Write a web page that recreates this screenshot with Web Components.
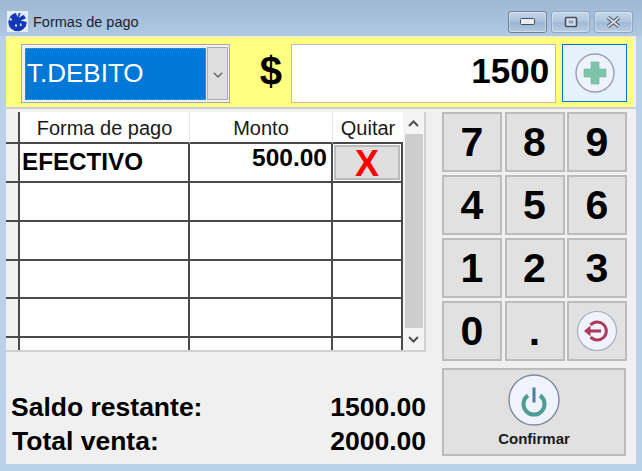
<!DOCTYPE html>
<html lang="es">
<head>
<meta charset="utf-8">
<title>Formas de pago</title>
<style>
  html, body { margin: 0; padding: 0; background: #b9d1ea; overflow: hidden; }
  body { font-family: "Liberation Sans", Arial, sans-serif; }
</style>
</head>
<body>
<pay-window>
  <pay-toolbar slot="top" method="T.DEBITO" amount="1500"></pay-toolbar>
  <pay-table slot="left"></pay-table>
  <pay-totals slot="left"></pay-totals>
  <key-pad slot="right"></key-pad>
</pay-window>

<script>
(function () {
  // ---- round glossy icons used by the add / back / confirm buttons ----
  const ICONS = {
    plus: `<svg width="42" height="42" viewBox="0 0 42 42"><circle cx="21" cy="21" r="19" fill="#eef2fa" stroke="#9a9fb5" stroke-width="1.4"/><path d="M17 10h8v7h7v8h-7v7h-8v-7h-7v-8h7z" fill="#7fc4a8" stroke="#6fb39a" stroke-width=".6"/></svg>`,
    back: `<svg width="42" height="42" viewBox="0 0 42 42"><circle cx="21" cy="21" r="19.5" fill="#f0f3fb" stroke="#a9aec4" stroke-width="1.2"/><path d="M14.6 15A9 9 0 1 1 14.6 27" fill="none" stroke="#b0395a" stroke-width="3"/><path d="M25 21H12" stroke="#b0395a" stroke-width="3"/><path d="M14.5 15.5 8 21l6.5 5.5z" fill="#b0395a"/></svg>`,
    power: `<svg width="52" height="52" viewBox="0 0 52 52"><circle cx="26" cy="26" r="25" fill="#f0f3fb" stroke="#7f8aa0" stroke-width="1.4"/><path d="M20 21.5a10.5 10.5 0 1 0 12 0" fill="none" stroke="#4f9d92" stroke-width="4"/><path d="M26 13.5v15" stroke="#4a7fa0" stroke-width="3"/></svg>`
  };

  class PayWindow extends HTMLElement {
    constructor() {
      super();
      this.attachShadow({ mode: "open" }).innerHTML = `
        <style>
          :host { display: flex; flex-direction: column; width: 642px; height: 471px; box-sizing: border-box; padding: 0 6px 7px 6px;
            background: linear-gradient(#9db6d2 0, #b0c8e2 36px, #b9d1ea 37px); }
          .title { flex: none; height: 36px; display: flex; align-items: center; margin: 0 -6px; padding: 7px 0 0 7px; box-sizing: border-box; font-size: 14.5px; color: #1a2430; }
          .title span { margin-left: 5px; }
          .btns { margin-left: auto; display: flex; gap: 4px; padding-right: 9px; }
          .client { flex: 1; min-height: 0; display: flex; flex-direction: column; background: #f0f0f0; border-top: 1px solid #e4edf6; }
          .body { flex: 1; min-height: 0; display: flex; padding-top: 3px; }
          .left { width: 420px; display: flex; flex-direction: column; }
          .right { margin-left: 16px; }
          .wb { width: 39px; height: 22px; box-sizing: border-box; border: 1px solid #6f8299; border-radius: 3px; display: flex; align-items: center; justify-content: center;
            background: linear-gradient(#c4d5e8, #a8bfd9 50%, #98b2cf 52%, #b4c9e0); box-shadow: inset 0 0 0 1px rgba(255,255,255,.35); }
          .wb.off { border-color: #8fa6c2; background: linear-gradient(#c6d7ea, #afc5dd 50%, #a2bad5 52%, #bacee4); }
        </style>
        <div class="title">
          <svg width="21" height="21" viewBox="0 0 21 21"><rect width="21" height="21" fill="#e4ecf6"/><circle cx="10.5" cy="11" r="9.2" fill="#1438b8"/><path d="M8.5 1 10.5 6 12 1zM14 2 11.5 7 17 3.5zM20 7 13.5 9.5 20 11zM2 6l3.5 2.5L3 10zM8 13.5h2v2H8zM13 12.5h1.5V15H13z" fill="#e4ecf6"/></svg>
          <span>Formas de pago</span>
          <div class="btns">
            <div class="wb"><svg width="15" height="7"><rect x=".5" y=".5" width="14" height="6" rx="1" fill="#e8edf3" stroke="#46505e"/></svg></div>
            <div class="wb off"><svg width="14" height="12"><rect x="1.5" y="1.5" width="11" height="9" rx="1" fill="#d6e0ec" stroke="#46505e" stroke-width="1.6"/><rect x="4.5" y="4.5" width="5" height="3" fill="#8ba3bf"/></svg></div>
            <div class="wb off"><svg width="15" height="12"><path d="M2 1.5 13 10.5M13 1.5 2 10.5" stroke="#48525f" stroke-width="3.6"/><path d="M2 1.5 13 10.5M13 1.5 2 10.5" stroke="#d5dde7" stroke-width="1.8"/></svg></div>
          </div>
        </div>
        <div class="client">
          <slot name="top"></slot>
          <div class="body">
            <div class="left"><slot name="left"></slot></div>
            <div class="right"><slot name="right"></slot></div>
          </div>
        </div>`;
    }
  }

  class PayToolbar extends HTMLElement {
    constructor() {
      super();
      const method = this.getAttribute("method"), amount = this.getAttribute("amount");
      this.attachShadow({ mode: "open" }).innerHTML = `
        <style>
          :host { display: block; flex: none; }
          .bar { height: 70px; box-sizing: border-box; background: #ffff80; margin-right: 3px; padding: 7px 6px 5px 15px; display: flex; }
          .line { height: 2px; background: #cfcfd4; }
          .combo { width: 209px; height: 59px; box-sizing: border-box; border: 1px solid #a9a9a9; background: #f0f0f0; padding: 3px 1px 2px 3px; display: flex; gap: 1px; }
          .sel { width: 181px; height: 52px; box-sizing: border-box; background: #0078d7; outline: 1px dotted #d07a20; outline-offset: -1px; color: #fff; font-size: 26px; line-height: 50px; padding-left: 2px; }
          .arrow { width: 21px; margin-top: -1px; padding-top: 3px; box-sizing: border-box; background: #dfdfdf; border: 1px solid #adadad; display: flex; align-items: center; justify-content: center; }
          .cur { width: 61px; box-sizing: border-box; padding-left: 21px; text-align: center; font-weight: 700; font-size: 40px; line-height: 55px; color: #000; }
          .amt { width: 266px; height: 59px; box-sizing: border-box; background: #fff; border: 1px solid #bdbdbd; text-align: right; font-weight: 700; font-size: 35px; line-height: 51px; padding-right: 6px; color: #000; }
          .add { width: 65px; height: 58px; margin-left: 6px; box-sizing: border-box; background: #e5f1fb; border: 1px solid #0078d7; display: flex; align-items: center; justify-content: center; }
        </style>
        <div class="bar">
          <div class="combo">
            <div class="sel">${method}</div>
            <div class="arrow"><svg width="10" height="6"><path d="M.8.8 5 5 9.2.8" fill="none" stroke="#606060" stroke-width="1.3"/></svg></div>
          </div>
          <div class="cur">$</div>
          <div class="amt">${amount}</div>
          <div class="add">${ICONS.plus}</div>
        </div>
        <div class="line"></div>`;
    }
  }

  class PayTable extends HTMLElement {
    constructor() {
      super();
      const row = (a, b, c, h) => `
        <div class="stub" style="height:${h}px"></div><div class="c name" style="height:${h}px">${a}</div><div class="c amt" style="height:${h}px">${b}</div><div class="c q" style="height:${h}px">${c}</div>`;
      this.attachShadow({ mode: "open" }).innerHTML = `
        <style>
          :host { display: flex; height: 240px; box-sizing: border-box; border-bottom: 2px solid #cfcfd4; border-right: 2px solid #cfcfd4; flex: none; }
          .grid { width: 397px; display: grid; grid-template-columns: 14px 170px 143px 70px; grid-auto-rows: min-content; overflow: hidden; background: #fff; }
          .stub { background: #f0f0f0; border-right: 2px solid #4a4a4a; border-bottom: 2px solid #4a4a4a; box-sizing: border-box; }
          .h { height: 32px; box-sizing: border-box; border-right: 1px solid #e8e8e8; border-bottom: 2px solid #4a4a4a; text-align: center; font-size: 20px; line-height: 33px; color: #1a1a1a; }
          .c { box-sizing: border-box; border-right: 2px solid #4a4a4a; border-bottom: 2px solid #4a4a4a; }
          .name { font-weight: 700; font-size: 24.2px; line-height: 36px; padding-left: 2px; color: #000; }
          .amt { font-weight: 700; font-size: 24.5px; line-height: 27px; text-align: right; padding-right: 4px; color: #000; }
          .q { padding: 1px; }
          .x { height: 35px; box-sizing: border-box; background: #dfdfdf; border: 2px solid #bcbcbc; color: #f00; font-weight: 700; font-size: 36px; line-height: 34px; text-align: center; }
          .sb { width: 21px; background: #f4f4f4; display: flex; flex-direction: column; align-items: center; }
          .up, .dn { height: 22px; width: 100%; display: flex; align-items: center; justify-content: center; }
          .thumb { flex: 1; width: 18px; background: #cdcdcd; }
        </style>
        <div class="grid">
          <div class="stub" style="height:32px"></div>
          <div class="h">Forma de pago</div><div class="h">Monto</div><div class="h" style="border-right:0">Quitar</div>
          ${row("EFECTIVO", "500.00", '<div class="x">X</div>', 39)}
          ${row("", "", "", 39)}${row("", "", "", 39)}${row("", "", "", 38)}${row("", "", "", 39)}${row("", "", "", 20)}
        </div>
        <div class="sb">
          <div class="up"><svg width="11" height="7"><path d="M1 6 5.5 1.5 10 6" fill="none" stroke="#505050" stroke-width="2"/></svg></div>
          <div class="thumb"></div>
          <div class="dn"><svg width="11" height="7"><path d="M1 1 5.5 5.5 10 1" fill="none" stroke="#505050" stroke-width="2"/></svg></div>
        </div>`;
    }
  }

  class PayTotals extends HTMLElement {
    constructor() {
      super();
      this.attachShadow({ mode: "open" }).innerHTML = `
        <style>
          :host { display: block; padding: 38px 0 0 5px; color: #000; font-weight: 700; font-size: 26.5px; }
          .r { display: flex; justify-content: space-between; width: 415px; height: 34px; line-height: 34px; }
          .r + .r { padding-left: 1px; width: 414px; }
        </style>
        <div class="r"><span>Saldo restante:</span><span>1500.00</span></div>
        <div class="r"><span>Total venta:</span><span>2000.00</span></div>`;
    }
  }

  class KeyButton extends HTMLElement {
    constructor() {
      super();
      this.attachShadow({ mode: "open" }).innerHTML = `
        <style>
          :host { display: flex; align-items: center; justify-content: center; box-sizing: border-box; width: 60px; height: 60px;
            background: #e1e1e1; border: 2px solid #bcbcbc; color: #000; font-weight: 700; font-size: 41px; }
        </style>
        <slot></slot>`;
    }
  }

  class KeyPad extends HTMLElement {
    constructor() {
      super();
      const keys = ["7", "8", "9", "4", "5", "6", "1", "2", "3", "0", "."];
      this.attachShadow({ mode: "open" }).innerHTML = `
        <style>
          :host { display: block; }
          .grid { display: grid; grid-template-columns: repeat(3, 60px); column-gap: 2.5px; row-gap: 3px; }
          .ok { display: flex; flex-direction: column; box-sizing: border-box; width: 184px; height: 88px; margin-top: 7px; background: #e1e1e1; border: 2px solid #bcbcbc; align-items: center; padding-top: 4px; font-size: 15px; font-weight: 700; color: #1a1a1a; }
          .ok svg { display: block; }
          .ok span { margin-top: 4px; }
        </style>
        <div class="grid">
          ${keys.map((k) => `<key-button>${k}</key-button>`).join("")}
          <key-button>${ICONS.back}</key-button>
        </div>
        <div class="ok">${ICONS.power}<span>Confirmar</span></div>`;
    }
  }

  customElements.define("key-button", KeyButton);
  customElements.define("key-pad", KeyPad);
  customElements.define("pay-totals", PayTotals);
  customElements.define("pay-table", PayTable);
  customElements.define("pay-toolbar", PayToolbar);
  customElements.define("pay-window", PayWindow);
})();
</script>
</body>
</html>
